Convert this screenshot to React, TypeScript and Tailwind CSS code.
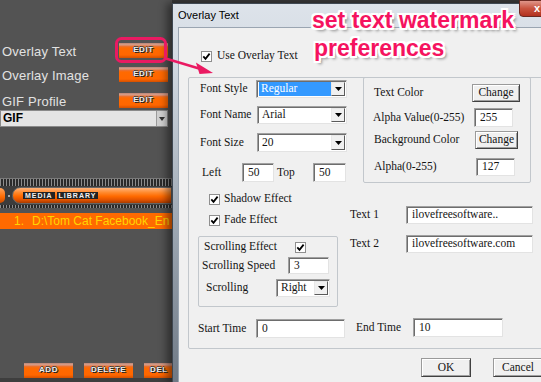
import React from 'react';

const Check = () => (
  <div className="w-[11px] h-[11px] shrink-0 bg-white border border-[#8f8f8f] flex items-center justify-center">
    <svg width="9" height="9" viewBox="0 0 9 9">
      <path d="M1.3 4.4 L3.5 6.8 L7.6 1.6" stroke="#000" strokeWidth="1.8" fill="none" />
    </svg>
  </div>
);

const Field = ({ value, w, h }: { value: string; w: string; h: string }) => (
  <div
    className={`${w} ${h} shrink-0 bg-white border border-[#a0a0a0] border-r-[#e3e3e3] border-b-[#e3e3e3] shadow-[inset_1px_1px_0_#6d6d6d] flex items-center pl-[5px] leading-none whitespace-nowrap overflow-hidden`}
  >
    {value}
  </div>
);

const Arrow = () => (
  <svg width="7" height="4" viewBox="0 0 7 4">
    <path d="M0 0h7L3.5 4z" fill="#000" />
  </svg>
);

const Select = ({ value, w, h, hl }: { value: string; w: string; h: string; hl?: boolean }) => (
  <div
    className={`${w} ${h} shrink-0 bg-white border border-[#a0a0a0] border-r-[#e3e3e3] border-b-[#e3e3e3] shadow-[inset_1px_1px_0_#6d6d6d] flex p-[1px] pl-[2px] leading-none`}
  >
    <div className={`flex-1 flex items-center pl-[2px] ${hl ? 'bg-[#3399ff] text-white' : ''}`}>{value}</div>
    <div className="w-[14px] shrink-0 bg-[#f0f0f0] border border-t-[#e8e8e8] border-l-[#e8e8e8] border-r-[#5a5a5a] border-b-[#5a5a5a] flex items-center justify-center">
      <Arrow />
    </div>
  </div>
);

const Btn = ({ label, w, h }: { label: string; w: string; h: string }) => (
  <div
    className={`${w} ${h} shrink-0 bg-[#f0f0f0] border border-[#9a9a9a] border-r-[#404040] border-b-[#404040] shadow-[inset_1px_1px_0_#fff,inset_-1px_-1px_0_#a0a0a0] flex items-center justify-center leading-none`}
  >
    {label}
  </div>
);

const OrangeBtn = ({ label, left }: { label: string; left?: boolean }) => (
  <div
    className={`w-[49px] h-[15px] shrink-0 bg-[linear-gradient(180deg,#b98575_0px,#dba08c_2px,#e5733c_3px,#ff6a00_5px,#ff6600_12px,#d45000_15px)] flex items-center pb-[1px] ${left ? 'justify-start pl-[6px]' : 'justify-center'}`}
  >
    <span className="text-[8px] leading-none font-bold tracking-[0.6px] text-[#eeeeee] [text-shadow:1px_1px_0_#222,-1px_0_0_#444,0_-1px_0_#444]">
      {label}
    </span>
  </div>
);

const OptRow = ({ label }: { label: string }) => (
  <div className="h-[15px] flex items-center">
    <span className="w-[119px] pl-[2px] pt-[2px] text-[13px] tracking-[0.2px] text-[#e2e2e2] whitespace-nowrap">{label}</span>
    <OrangeBtn label="EDIT" />
  </div>
);

const rib = 'bg-[repeating-linear-gradient(90deg,#8c8c8c_0px,#8c8c8c_1px,#2a2a2a_1px,#2a2a2a_3px)]';

const LeftPanel = () => (
  <div className="w-[172px] h-full shrink-0 bg-[#535353] flex flex-col overflow-hidden font-['Liberation_Sans',Arial,sans-serif]">
    <div className="h-[43px] shrink-0" />
    <OptRow label="Overlay Text" />
    <div className="mt-[9px]">
      <OptRow label="Overlay Image" />
    </div>
    <div className="mt-[11px]">
      <OptRow label="GIF Profile" />
    </div>
    <div className="mt-[2px] h-[17px] w-[168px] shrink-0 bg-[#e4e4e4] border border-[#8a8a8a] flex">
      <span className="flex-1 pl-[2px] text-[12px] font-bold leading-[15px] text-black">GIF</span>
      <div className="w-[11px] bg-[#d0d0d0] border-l border-[#9a9a9a] flex items-center justify-center">
        <svg width="6" height="4" viewBox="0 0 6 4">
          <path d="M0 0h6L3 4z" fill="#333" />
        </svg>
      </div>
    </div>

    <div className="mt-[51px] h-[30px] shrink-0 flex flex-col">
      <div className={`h-[8px] border-t border-[#7a7a7a] ${rib}`} />
      <div className="h-[19px] flex items-center bg-[#3c3c3c]">
        <div className="w-[5px] h-[15px] rounded-r-full bg-[linear-gradient(180deg,#ffa45c,#ff6a00_60%,#c84a00)]" />
        <div className="w-[7px] h-[15px] flex items-center justify-center">
          <div className="w-[2px] h-[2px] bg-[#aaa]" />
        </div>
        <div className="flex-1 h-[17px] rounded-l-full border border-[#666] bg-[linear-gradient(180deg,#ffb27a_0%,#ff8a2e_30%,#ff6a00_55%,#e05200_80%,#a83c00_100%)] flex items-center pl-[10px] gap-[2px]">
          <span className="bg-[#222] text-[#f2f2f2] text-[7px] font-bold leading-[7px] px-[2px] tracking-[1px]">MEDIA</span>
          <span className="bg-[#222] text-[#f2f2f2] text-[7px] font-bold leading-[7px] px-[2px] tracking-[1px]">LIBRARY</span>
        </div>
      </div>
      <div className={`h-[3px] ${rib}`} />
    </div>

    <div className="mt-[5px] h-[16px] shrink-0 bg-[#ff6a00] flex items-center pl-[14px] text-[12px] text-[#ffd400] whitespace-nowrap">
      <span className="w-[18px] shrink-0">1.</span>
      <span>{'D:\\Tom Cat Facebook_En'}</span>
    </div>

    <div className="flex-1" />
    <div className="h-[15px] shrink-0 flex gap-[11px] pl-[24px]">
      <OrangeBtn label="ADD" />
      <OrangeBtn label="DELETE" />
      <OrangeBtn label="DEL" left />
    </div>
    <div className="h-[4px] shrink-0 bg-[#3e3e3e]" />
  </div>
);

const Dialog = () => (
  <div className="relative flex-1 mt-[3px] flex flex-col overflow-hidden border-l border-t border-[#3f4852] bg-[linear-gradient(180deg,#dde3ea_0px,#d5dce4_50px,#9ea8b3_220px,#6f7985_379px)] shadow-[-5px_0_8px_rgba(0,0,0,0.45)]">
    <div className="h-[23px] shrink-0 flex items-center pl-[5px] pb-[1px] text-[11px] text-black font-['Liberation_Sans',Arial,sans-serif]">
      Overlay Text
    </div>
    <div className="flex-1 ml-[5px] flex flex-col bg-[#f0f0f0] border-t border-l border-[#9aa5b1] font-['Liberation_Serif','Times_New_Roman',serif] text-[11.5px] text-[#141414]">
      <div className="mt-[22px] h-[12px] flex items-center pl-[22px]">
        <Check />
        <span className="ml-[5px]">Use Overlay Text</span>
      </div>

      <div className="mt-[15px] ml-[9px] w-[372px] h-[272px] shrink-0 border border-[#c2c7cc] rounded-[2px] flex">
        {/* left column */}
        <div className="w-[161px] shrink-0 flex flex-col">
          <div className="mt-[2px] h-[18px] flex items-center pl-[11px]">
            <span className="w-[56px]">Font Style</span>
            <Select value="Regular" w="w-[91px]" h="h-[18px]" hl />
          </div>
          <div className="mt-[8px] h-[18px] flex items-center pl-[11px]">
            <span className="w-[57px]">Font Name</span>
            <Select value="Arial" w="w-[90px]" h="h-[18px]" />
          </div>
          <div className="mt-[9px] h-[19px] flex items-center pl-[11px]">
            <span className="w-[57px]">Font Size</span>
            <Select value="20" w="w-[90px]" h="h-[19px]" />
          </div>
          <div className="mt-[11px] h-[19px] flex items-center pl-[13px]">
            <span className="w-[40px]">Left</span>
            <Field value="50" w="w-[32px]" h="h-[19px]" />
            <span className="ml-[3px] w-[36px]">Top</span>
            <Field value="50" w="w-[33px]" h="h-[19px]" />
          </div>
          <div className="mt-[10px] h-[14px] flex items-center pl-[20px]">
            <Check />
            <span className="ml-[4px]">Shadow Effect</span>
          </div>
          <div className="mt-[7px] h-[14px] flex items-center pl-[20px]">
            <Check />
            <span className="ml-[4px]">Fade Effect</span>
          </div>

          <div className="mt-[9px] ml-[9px] w-[140px] h-[71px] border border-[#c2c7cc] rounded-[2px] flex flex-col">
            <div className="mt-[4px] h-[12px] flex items-center pl-[5px]">
              <span className="w-[91px] whitespace-nowrap">Scrolling Effect</span>
              <Check />
            </div>
            <div className="mt-[4px] h-[17px] flex items-center pl-[3px]">
              <span className="w-[86px] whitespace-nowrap">Scrolling Speed</span>
              <Field value="3" w="w-[41px]" h="h-[17px]" />
            </div>
            <div className="mt-[5px] h-[18px] flex items-center pl-[7px]">
              <span className="w-[70px]">Scrolling</span>
              <Select value="Right" w="w-[54px]" h="h-[18px]" />
            </div>
          </div>

          <div className="mt-[12px] h-[19px] flex items-center pl-[9px]">
            <span className="w-[58px] whitespace-nowrap">Start Time</span>
            <Field value="0" w="w-[89px]" h="h-[19px]" />
          </div>
        </div>

        {/* right column */}
        <div className="flex-1 flex flex-col">
          <div className="-mt-px ml-[13px] w-[168px] h-[106px] shrink-0 border border-[#c2c7cc] rounded-[2px] flex flex-col">
            <div className="mt-[6px] h-[18px] flex items-center pl-[10px]">
              <span className="w-[98px]">Text Color</span>
              <Btn label="Change" w="w-[48px]" h="h-[18px]" />
            </div>
            <div className="mt-[6px] h-[19px] flex items-center pl-[9px]">
              <span className="w-[101px] whitespace-nowrap">Alpha Value(0-255)</span>
              <Field value="255" w="w-[39px]" h="h-[19px]" />
            </div>
            <div className="mt-[4px] h-[18px] flex items-center pl-[10px]">
              <span className="w-[101px] whitespace-nowrap">Background Color</span>
              <Btn label="Change" w="w-[43px]" h="h-[18px]" />
            </div>
            <div className="mt-[9px] h-[18px] flex items-center pl-[10px]">
              <span className="w-[102px] whitespace-nowrap">Alpha(0-255)</span>
              <Field value="127" w="w-[39px]" h="h-[18px]" />
            </div>
          </div>

          <div className="mt-[23px] h-[18px] flex items-center">
            <span className="w-[56px]">Text 1</span>
            <Field value="ilovefreesoftware.." w="w-[127px]" h="h-[18px]" />
          </div>
          <div className="mt-[11px] h-[18px] flex items-center">
            <span className="w-[56px]">Text 2</span>
            <Field value="ilovefreesoftware.com" w="w-[127px]" h="h-[18px]" />
          </div>
          <div className="mt-[65px] h-[19px] flex items-center pl-[6px]">
            <span className="w-[57px] whitespace-nowrap">End Time</span>
            <Field value="10" w="w-[90px]" h="h-[19px]" />
          </div>
        </div>
      </div>

      <div className="mt-[9px] flex pl-[242px] gap-[22px]">
        <Btn label="OK" w="w-[50px]" h="h-[19px]" />
        <Btn label="Cancel" w="w-[50px]" h="h-[19px]" />
      </div>
    </div>
  </div>
);

const Annotation = () => (
  <>
    <svg className="absolute inset-0 pointer-events-none" width="541" height="382" viewBox="0 0 541 382">
      <rect x="116.5" y="38.5" width="49" height="23" rx="5" fill="none" stroke="#ea1a62" strokeWidth="3" />
      <line x1="164" y1="58" x2="199" y2="68.5" stroke="#ea1a62" strokeWidth="2.5" />
      <polygon points="213,73 195.9,62.5 199.5,73.9" fill="#ea1a62" />
    </svg>
    <div className="absolute left-[312px] top-[6px] pointer-events-none font-['Liberation_Sans',Arial,sans-serif] font-bold text-[23px] leading-[28px] text-[#f5135f] whitespace-nowrap [text-shadow:-2px_-2px_0_#fff,2px_-2px_0_#fff,-2px_2px_0_#fff,2px_2px_0_#fff,0_2px_0_#fff,2px_0_0_#fff,-2px_0_0_#fff,0_-2px_0_#fff,3px_3px_3px_rgba(0,0,0,0.45)]">
      <div>set text watermark</div>
      <div className="pl-[2px]">preferences</div>
    </div>
    <div className="absolute left-[519px] top-0 w-[30px] h-[17px] rounded-bl-[4px] border border-[#6b2a22] bg-[linear-gradient(180deg,#e0968a,#c9543f_50%,#b2321f)] flex items-center pl-[14px] pointer-events-none">
      <span className="text-white text-[11px] font-bold leading-none font-['Liberation_Sans',Arial,sans-serif]">x</span>
    </div>
  </>
);

export default function App() {
  return (
    <div className="relative w-[541px] h-[382px] overflow-hidden bg-[#3a3a3a] flex">
      <LeftPanel />
      <Dialog />
      <Annotation />
    </div>
  );
}
